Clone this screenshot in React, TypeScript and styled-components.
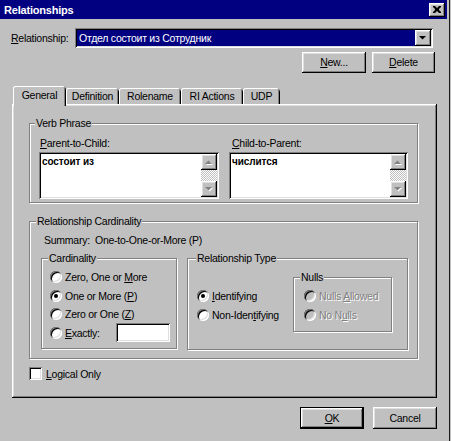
import React from "react";
import styled, { createGlobalStyle, css } from "styled-components";

const GlobalStyle = createGlobalStyle`
  html, body { margin: 0; padding: 0; background: #c0c0c0; }
  body {
    font-family: "Liberation Sans", Arial, sans-serif;
    font-size: 10.5px;
    color: #000;
  }
  * { box-sizing: border-box; }
  u { text-underline-offset: 1px; }
`;

const raised = css`
  box-shadow: inset -1px -1px #000, inset 1px 1px #fff, inset -2px -2px #808080,
    inset 2px 2px #dfdfdf;
`;
const sunken = css`
  box-shadow: inset 1px 1px #808080, inset -1px -1px #fff, inset 2px 2px #000,
    inset -2px -2px #dfdfdf;
`;

const Window = styled.div`
  width: 451px;
  height: 441px;
  background: #c0c0c0;
  display: flex;
  flex-direction: column;
  box-shadow: inset -1px 0 #c0c0c0, inset -2px 0 #1a1a1a;
  letter-spacing: -0.25px;
  overflow: hidden;
`;

const TitleBar = styled.div`
  height: 19px;
  margin-right: 4px;
  background: #000080;
  display: flex;
  align-items: center;
  justify-content: space-between;
  padding: 0 2px 0 4px;
`;

const TitleText = styled.span`
  color: #fff;
  font-weight: bold;
  font-size: 11px;
  letter-spacing: -0.2px;
`;

const CloseButton = styled.div`
  width: 16px;
  height: 14px;
  background: #c0c0c0;
  ${raised};
  display: flex;
  align-items: center;
  justify-content: center;
  padding-bottom: 1px;
`;

const Content = styled.div`
  display: flex;
  flex-direction: column;
  padding: 9px 14px 0 11px;
`;

const FieldRow = styled.div`
  display: flex;
  align-items: center;
  height: 20px;
`;

const FieldLabel = styled.span`
  width: 64px;
`;

const Combo = styled.div`
  width: 358px;
  height: 20px;
  background: #fff;
  ${sunken};
  padding: 2px;
  display: flex;
`;

const ComboValue = styled.div`
  flex: 1;
  background: #000080;
  color: #fff;
  padding-left: 2px;
  line-height: 16px;
  white-space: nowrap;
`;

const DropButton = styled.div`
  width: 16px;
  height: 16px;
  background: #c0c0c0;
  ${raised};
  display: flex;
  align-items: center;
  justify-content: center;
`;

const ButtonRow = styled.div<{ $mt: number; $gap: number; $pr?: number }>`
  display: flex;
  justify-content: flex-end;
  gap: ${(p) => p.$gap}px;
  margin-top: ${(p) => p.$mt}px;
  padding-right: ${(p) => p.$pr ?? 0}px;
`;

const Button = styled.div<{ $w: number; $h: number; $default?: boolean }>`
  width: ${(p) => p.$w}px;
  height: ${(p) => p.$h}px;
  background: #c0c0c0;
  display: flex;
  align-items: center;
  justify-content: center;
  padding-bottom: 1px;
  ${(p) =>
    p.$default
      ? css`
          border: 1px solid #000;
          box-shadow: inset -1px -1px #000, inset 1px 1px #fff,
            inset -2px -2px #808080, inset 2px 2px #dfdfdf;
        `
      : raised};
`;

const TabStrip = styled.div`
  display: flex;
  align-items: flex-end;
  height: 18px;
  margin-top: 13px;
  padding-left: 2px;
`;

const Tab = styled.div<{ $w: number; $active?: boolean }>`
  position: relative;
  width: ${(p) => p.$w}px;
  height: ${(p) => (p.$active ? 20 : 16)}px;
  margin-bottom: ${(p) => (p.$active ? -2 : 0)}px;
  z-index: ${(p) => (p.$active ? 2 : 1)};
  background: #c0c0c0;
  border-radius: 3px 3px 0 0;
  box-shadow: inset 1px 0 #fff, inset 0 1px #fff, inset -1px 0 #000,
    inset -2px 0 #808080;
  display: flex;
  align-items: center;
  justify-content: center;
  padding-bottom: ${(p) => (p.$active ? 3 : 1)}px;
`;

const Panel = styled.div`
  margin-left: 1px;
  width: 425px;
  height: 294px;
  ${raised};
  display: flex;
  flex-direction: column;
  align-items: flex-start;
  padding: 19px 0 0 17px;
`;

const Group = styled.div<{
  $w: number;
  $h: number;
  $mt?: number;
  $pad: string;
}>`
  position: relative;
  width: ${(p) => p.$w}px;
  height: ${(p) => p.$h}px;
  margin-top: ${(p) => p.$mt ?? 0}px;
  padding: ${(p) => p.$pad};
  border: 1px solid #808080;
  box-shadow: inset 1px 1px #fff, 1px 1px #fff;
  flex-shrink: 0;
`;

const Legend = styled.span<{ $lx: number; $disabled?: boolean }>`
  position: absolute;
  top: -7px;
  left: ${(p) => p.$lx}px;
  padding: 0 1px;
  line-height: 13px;
  background: #c0c0c0;
  white-space: nowrap;
`;

const Columns = styled.div`
  display: flex;
  gap: 10px;
`;

const Column = styled.div<{ $w: number }>`
  width: ${(p) => p.$w}px;
  display: flex;
  flex-direction: column;
  gap: 2px;
`;

const ColLabel = styled.span<{ $pl: number }>`
  line-height: 13px;
  padding-left: ${(p) => p.$pl}px;
`;

const MemoBox = styled.div`
  height: 47px;
  background: #fff;
  ${sunken};
  padding: 2px;
  display: flex;
`;

const MemoText = styled.div`
  flex: 1;
  padding: 2px 0 0 1px;
  font-size: 10px;
  font-weight: bold;
  letter-spacing: -0.1px;
  line-height: 12px;
`;

const ScrollBar = styled.div`
  width: 16px;
  display: flex;
  flex-direction: column;
`;

const ScrollBtn = styled.div`
  width: 16px;
  height: 16px;
  background: #c0c0c0;
  ${raised};
  display: flex;
  align-items: center;
  justify-content: center;
`;

const ScrollTrack = styled.div`
  flex: 1;
  background: repeating-conic-gradient(#fff 0 25%, #c0c0c0 0 50%) 0 0 / 2px 2px;
`;

const SummaryRow = styled.div`
  display: flex;
  line-height: 13px;
  margin-left: 3px;
`;

const SummaryLabel = styled.span`
  width: 51px;
`;

const SubRow = styled.div`
  display: flex;
  gap: 10px;
  margin-top: 11px;
`;

const RadioList = styled.div<{ $mt?: number; $w?: number }>`
  display: flex;
  flex-direction: column;
  margin-top: ${(p) => p.$mt ?? 0}px;
  width: ${(p) => (p.$w ? `${p.$w}px` : "auto")};
  flex-shrink: 0;
`;

const RadioRow = styled.div`
  display: flex;
  align-items: center;
  height: 18.5px;
  gap: 3px;
`;

const RadioDot = styled.span<{ $checked?: boolean; $disabled?: boolean }>`
  position: relative;
  width: 12px;
  height: 12px;
  border-radius: 50%;
  flex-shrink: 0;
  background: ${(p) => (p.$disabled ? "#c0c0c0" : "#fff")};
  box-shadow: inset 1px 1px #808080, inset -1px -1px #fff, inset 2px 2px #000,
    inset -2px -2px #dfdfdf;
  ${(p) =>
    p.$checked &&
    css`
      &::after {
        content: "";
        position: absolute;
        left: 4px;
        top: 4px;
        width: 4px;
        height: 4px;
        border-radius: 50%;
        background: #000;
      }
    `}
`;

const RadioText = styled.span<{ $disabled?: boolean; $w?: number }>`
  white-space: nowrap;
  width: ${(p) => (p.$w ? `${p.$w}px` : "auto")};
  color: ${(p) => (p.$disabled ? "#808080" : "#000")};
  text-shadow: ${(p) => (p.$disabled ? "1px 1px #fff" : "none")};
`;

const TextInput = styled.div`
  width: 54px;
  height: 19px;
  background: #fff;
  ${sunken};
`;

const TypeRow = styled.div`
  display: flex;
  padding: 18px 0 0 9px;
`;

const CheckRow = styled.div`
  display: flex;
  align-items: center;
  gap: 4px;
  margin-top: 8px;
  height: 13px;
`;

const CheckBox = styled.span`
  width: 13px;
  height: 13px;
  background: #fff;
  ${sunken};
`;

const Arrow = ({ up, disabled }: { up?: boolean; disabled?: boolean }) => (
  <svg width="8" height="5" viewBox="0 0 8 5" style={{ overflow: "visible" }}>
    {disabled && (
      <path
        d={up ? "M1 5h7L4.5 1.5z" : "M1 1h7L4.5 4.5z"}
        fill="#fff"
      />
    )}
    <path
      d={up ? "M0 4h7L3.5 0.5z" : "M0 0h7L3.5 3.5z"}
      fill={disabled ? "#808080" : "#000"}
    />
  </svg>
);

const Memo = ({ text }: { text: string }) => (
  <MemoBox>
    <MemoText>{text}</MemoText>
    <ScrollBar>
      <ScrollBtn>
        <Arrow up disabled />
      </ScrollBtn>
      <ScrollTrack />
      <ScrollBtn>
        <Arrow disabled />
      </ScrollBtn>
    </ScrollBar>
  </MemoBox>
);

const Radio = ({
  children,
  checked,
  disabled,
  w,
}: {
  children: React.ReactNode;
  checked?: boolean;
  disabled?: boolean;
  w?: number;
}) => (
  <RadioRow>
    <RadioDot $checked={checked} $disabled={disabled} />
    <RadioText $disabled={disabled} $w={w}>
      {children}
    </RadioText>
  </RadioRow>
);

export default function App() {
  return (
    <>
      <GlobalStyle />
      <Window>
        <TitleBar>
          <TitleText>Relationships</TitleText>
          <CloseButton>
            <svg width="8" height="7" viewBox="0 0 8 7">
              <path
                d="M0 0h2l2 2 2-2h2v1L6 3v1l2 2v1H6L4 5 2 7H0V6l2-2V3L0 1z"
                fill="#000"
              />
            </svg>
          </CloseButton>
        </TitleBar>
        <Content>
          <FieldRow>
            <FieldLabel>
              <u>R</u>elationship:
            </FieldLabel>
            <Combo>
              <ComboValue>Отдел состоит из Сотрудник</ComboValue>
              <DropButton>
                <Arrow />
              </DropButton>
            </Combo>
          </FieldRow>
          <ButtonRow $mt={4} $gap={6} $pr={2}>
            <Button $w={64} $h={21}>
              <span>
                <u>N</u>ew...
              </span>
            </Button>
            <Button $w={63} $h={21}>
              <span>
                <u>D</u>elete
              </span>
            </Button>
          </ButtonRow>

          <TabStrip>
            <Tab $w={53} $active>
              General
            </Tab>
            <Tab $w={53}>Definition</Tab>
            <Tab $w={62}>Rolename</Tab>
            <Tab $w={62}>RI Actions</Tab>
            <Tab $w={37}>UDP</Tab>
          </TabStrip>
          <Panel>
            <Group $w={389} $h={80} $pad="13px 9px 0 9px">
              <Legend $lx={5}>Verb Phrase</Legend>
              <Columns>
                <Column $w={180}>
                  <ColLabel $pl={1}>
                    <u>P</u>arent-to-Child:
                  </ColLabel>
                  <Memo text="состоит из" />
                </Column>
                <Column $w={179}>
                  <ColLabel $pl={3}>
                    <u>C</u>hild-to-Parent:
                  </ColLabel>
                  <Memo text="числится" />
                </Column>
              </Columns>
            </Group>

            <Group $w={389} $h={138} $mt={18} $pad="12px 0 0 11px">
              <Legend $lx={6}>Relationship Cardinality</Legend>
              <SummaryRow>
                <SummaryLabel>Summary:</SummaryLabel>
                <span>One-to-One-or-More (P)</span>
              </SummaryRow>
              <SubRow>
                <Group $w={136} $h={91} $pad="9px 0 0 8px">
                  <Legend $lx={6}>Cardinality</Legend>
                  <RadioList>
                    <Radio>
                      Zero, One or <u>M</u>ore
                    </Radio>
                    <Radio checked>
                      One or More (<u>P</u>)
                    </Radio>
                    <Radio>
                      Zero or One (<u>Z</u>)
                    </Radio>
                    <RadioRow>
                      <RadioDot />
                      <RadioText $w={48}>
                        <u>E</u>xactly:
                      </RadioText>
                      <TextInput />
                    </RadioRow>
                  </RadioList>
                </Group>
                <Group $w={221} $h={92} $pad="0">
                  <Legend $lx={8}>Relationship Type</Legend>
                  <TypeRow>
                    <RadioList $mt={10} $w={96}>
                      <Radio checked>
                        <u>I</u>dentifying
                      </Radio>
                      <Radio>
                        Non-Iden<u>t</u>ifying
                      </Radio>
                    </RadioList>
                    <Group $w={99} $h={55} $pad="9px 0 0 10px">
                      <Legend $lx={6}>Nulls</Legend>
                      <RadioList>
                        <Radio disabled>
                          Nulls <u>A</u>llowed
                        </Radio>
                        <Radio disabled>
                          No N<u>u</u>lls
                        </Radio>
                      </RadioList>
                    </Group>
                  </TypeRow>
                </Group>
              </SubRow>
            </Group>

            <CheckRow>
              <CheckBox />
              <span>
                <u>L</u>ogical Only
              </span>
            </CheckRow>
          </Panel>

          <ButtonRow $mt={9} $gap={9}>
            <Button $w={64} $h={22} $default>
              <span>
                <u>O</u>K
              </span>
            </Button>
            <Button $w={64} $h={22}>
              Cancel
            </Button>
          </ButtonRow>
        </Content>
      </Window>
    </>
  );
}
